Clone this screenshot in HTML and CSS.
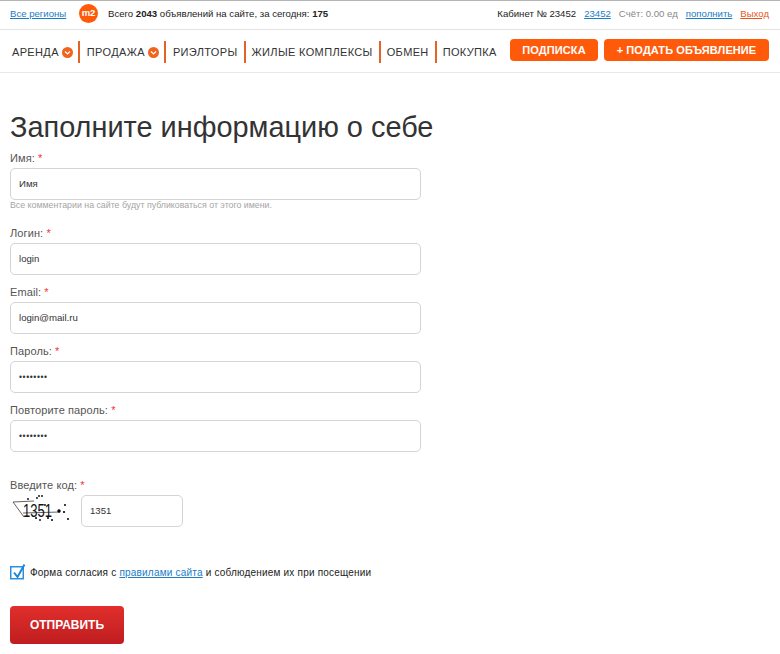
FILE: index.html
```html
<!DOCTYPE html>
<html lang="ru">
<head>
<meta charset="utf-8">
<title>Регистрация</title>
<link rel="stylesheet" href="styles.css">
</head>
<body>
<header class="topbar">
  <div class="topbar-left">
    <a class="link regions" href="#">Все регионы</a>
    <span class="logo">m2</span>
    <span class="stats">Всего <b>2043</b> объявлений на сайте, за сегодня: <b>175</b></span>
  </div>
  <div class="topbar-right">
    <span>Кабинет № 23452</span>
    <a class="link" href="#">23452</a>
    <span class="muted">Счёт: 0.00 ед</span>
    <a class="link" href="#">пополнить</a>
    <a class="exit" href="#">Выход</a>
  </div>
</header>
<nav class="nav">
  <ul class="menu">
    <li class="menu-item has-chev">АРЕНДА<span class="chev"><svg width="11" height="11" viewBox="0 0 11 11"><path d="M3 4.5l2.5 2.5L8 4.5" fill="none" stroke="#fff" stroke-width="1.2"/></svg></span></li>
    <li class="menu-item has-chev">ПРОДАЖА<span class="chev"><svg width="11" height="11" viewBox="0 0 11 11"><path d="M3 4.5l2.5 2.5L8 4.5" fill="none" stroke="#fff" stroke-width="1.2"/></svg></span></li>
    <li class="menu-item">РИЭЛТОРЫ</li>
    <li class="menu-item">ЖИЛЫЕ КОМПЛЕКСЫ</li>
    <li class="menu-item">ОБМЕН</li>
    <li class="menu-item">ПОКУПКА</li>
  </ul>
  <div class="nav-buttons">
    <a class="nav-btn sub" href="#">ПОДПИСКА</a>
    <a class="nav-btn add" href="#">+ ПОДАТЬ ОБЪЯВЛЕНИЕ</a>
  </div>
</nav>
<main class="page">
  <h1 class="title">Заполните информацию о себе</h1>
  <form class="form">
    <div class="field first">
      <label class="label">Имя: <i>*</i></label>
      <input class="input" type="text" value="Имя">
      <p class="hint">Все комментарии на сайте будут публиковаться от этого имени.</p>
    </div>
    <div class="field login">
      <label class="label">Логин: <i>*</i></label>
      <input class="input" type="text" value="login">
    </div>
    <div class="field">
      <label class="label">Email: <i>*</i></label>
      <input class="input" type="text" value="login@mail.ru">
    </div>
    <div class="field">
      <label class="label">Пароль: <i>*</i></label>
      <input class="input secret" type="password" value="12345678">
    </div>
    <div class="field">
      <label class="label">Повторите пароль: <i>*</i></label>
      <input class="input secret" type="password" value="12345678">
    </div>
    <div class="field code">
      <label class="label">Введите код: <i>*</i></label>
      <div class="code-row">
        <svg class="captcha" width="60" height="32" viewBox="0 0 60 32">
          <path d="M3 7L14 22M3 7L24 6M13 18L50 17" stroke="#222" stroke-width="0.7" fill="none"/>
          <text x="13" y="22" class="captcha-text" textLength="29" lengthAdjust="spacingAndGlyphs">1351</text>
          <g fill="#000">
            <circle cx="29" cy="1" r=".9"/><circle cx="32" cy="1" r=".9"/><circle cx="18" cy="4" r=".9"/><circle cx="27" cy="3" r=".9"/><circle cx="55" cy="10" r="1"/><circle cx="35" cy="10" r=".9"/><circle cx="49" cy="16" r="1.7"/><circle cx="54" cy="17" r="1.1"/><circle cx="26" cy="23" r="1"/><circle cx="38" cy="23" r="1"/><circle cx="42" cy="25" r="1"/><circle cx="58" cy="24" r="1"/><circle cx="30" cy="25" r=".9"/>
          </g>
        </svg>
        <input class="input small" type="text" value="1351">
      </div>
    </div>
    <label class="agree">
      <svg class="check" width="16" height="17" viewBox="0 0 16 17"><rect x=".75" y="2.75" width="12.5" height="12" fill="#fff" stroke="#2d8fe0" stroke-width="1.5"/><path d="M4 8.5l3.5 4.5L14.5 .5" fill="none" stroke="#1f86d6" stroke-width="2"/></svg>
      <span>Форма согласия с <a class="link" href="#">правилами сайта</a> и соблюдением их при посещении</span>
    </label>
    <button class="submit" type="button">ОТПРАВИТЬ</button>
  </form>
</main>
</body>
</html>
```
FILE: styles.css
```css
* { box-sizing: border-box; }
html, body { margin: 0; padding: 0; }
body {
  font-family: "Liberation Sans", Arial, sans-serif;
  font-size: 9.6px;
  color: #222;
  background: #fff;
  height: 654px;
  overflow: hidden;
}
a { color: inherit; }
.link { color: #1b7dc4; text-decoration: underline; }
.topbar {
  height: 30px;
  border-top: 1px solid #b5b5b5;
  border-bottom: 1px solid #e3e3e3;
  display: flex;
  justify-content: space-between;
  align-items: center;
  padding: 0 11px 4px 10px;
}
.topbar-left { display: flex; align-items: center; }
.regions { width: 69px; }
.logo {
  width: 19px; height: 19px; border-radius: 50%;
  background: #ff5a0a; color: #fff;
  font-weight: bold; font-size: 9.5px;
  display: flex; align-items: center; justify-content: center;
  padding-bottom: 2px;
  margin-right: 10px;
}
.topbar-right { display: flex; gap: 8px; align-items: center; }
.muted { color: #888; }
.exit { color: #e8571a; text-decoration: underline; }
.nav {
  height: 43px;
  border-bottom: 1px solid #e8e8e8;
  display: flex;
  justify-content: space-between;
  align-items: center;
  padding: 2px 11px 0 12px;
}
.menu { list-style: none; margin: 0; padding: 0; display: flex; align-items: center; }
.menu-item {
  font-size: 11px;
  letter-spacing: .35px;
  color: #333;
  display: flex;
  align-items: center;
  gap: 3px;
  height: 22px;
  padding-right: 6px;
  margin-right: 6px;
  border-right: 2px solid #e2622a;
  white-space: nowrap;
}
.menu-item.has-chev { padding-right: 5px; margin-right: 7px; }
.menu-item:last-child { border-right: 0; margin-right: 0; padding-right: 0; }
.chev {
  width: 11px; height: 11px; border-radius: 50%; background: #f0641e;
  display: flex;
}
.nav-buttons { display: flex; gap: 6px; margin-bottom: 4px; }
.nav-btn {
  height: 22px; line-height: 22px;
  background: #ff5a0a; color: #fff;
  font-weight: bold; font-size: 11px;
  letter-spacing: .1px;
  border-radius: 4px;
  text-decoration: none;
  text-align: center;
}
.sub { width: 88px; }
.add { width: 165px; }
.page { padding: 0 10px; }
.title {
  font-weight: normal;
  font-size: 28.9px;
  line-height: 36px;
  color: #333;
  margin: 36px 0 7px;
}
.form { width: 411px; }
.field { margin-top: 11px; }
.field.first { margin-top: 0; }
.field.login { margin-top: 17px; }
.field.code { margin-top: 27px; }
.label { display: block; font-size: 11px; letter-spacing: .1px; line-height: 13px; color: #555; margin-bottom: 3px; }
.label i { color: #e33; font-style: normal; }
.input {
  display: block;
  width: 100%;
  height: 32px;
  border: 1px solid #d4d4d4;
  border-radius: 5px;
  padding: 0 8px 2px;
  font: 9.6px "Liberation Sans", Arial, sans-serif;
  color: #333;
  background: #fff;
  outline: none;
}
.input.secret { padding-bottom: 0; font-size: 8.5px; letter-spacing: .6px; }
.input.small { width: 102px; }
.hint { margin: 0; font-size: 8.8px; line-height: 10px; color: #a5a5a5; }
.code-row { display: flex; align-items: flex-start; gap: 11px; }
.captcha { display: block; flex: none; }
.captcha-text { font: 19px "Liberation Sans", sans-serif; fill: #111; }
.agree { display: flex; align-items: center; gap: 4px; margin-top: 37px; height: 17px; font-size: 10px; letter-spacing: .2px; color: #222; }
.check { display: block; flex: none; }
.submit {
  display: block;
  margin-top: 25px;
  width: 114px;
  height: 38px;
  border: 0;
  border-radius: 4px;
  background: linear-gradient(#e12f2c, #bf1d20);
  color: #fff;
  font: bold 12px "Liberation Sans", Arial, sans-serif;
}
```
